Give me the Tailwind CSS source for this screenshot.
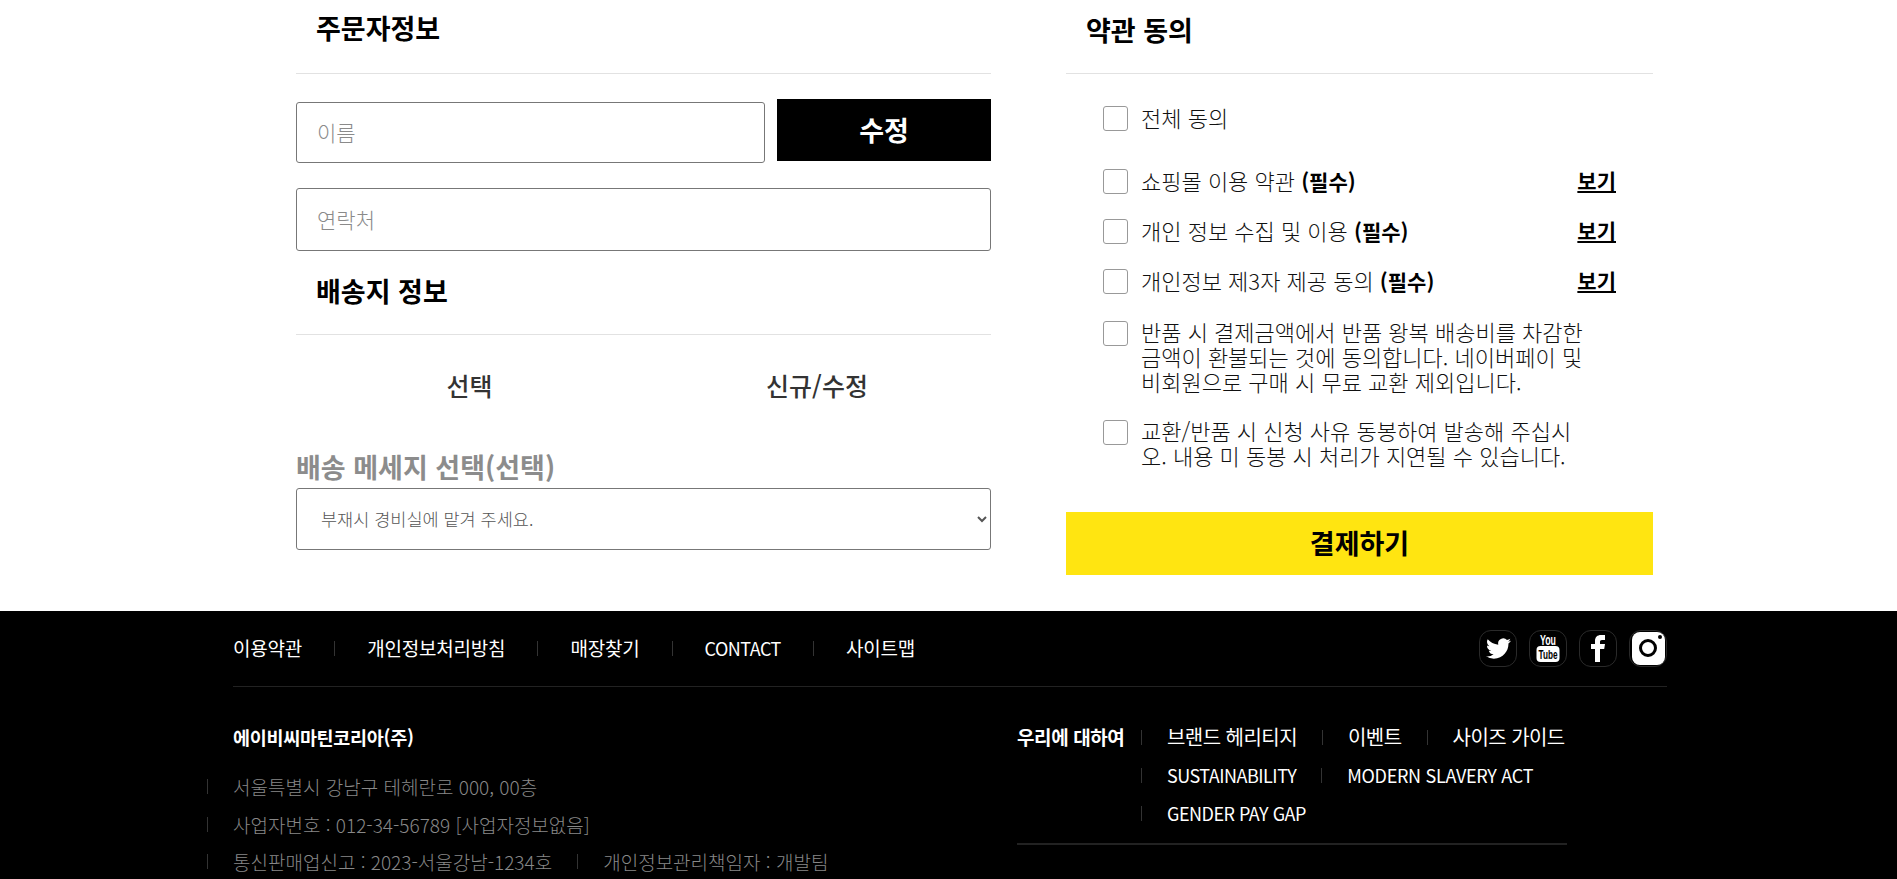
<!doctype html>
<html lang="ko">
<head>
<meta charset="utf-8">
<script src="https://cdn.jsdelivr.net/npm/@tailwindcss/browser@4"></script>
</head>
<body class="bg-white text-black h-[879px] overflow-hidden font-['Noto_Sans_CJK_KR','Noto_Sans',sans-serif]">
<main class="h-[611px] flex pl-[296px]">
  <section class="w-[695px] shrink-0">
    <h2 class="h-[74px] pl-5 pt-[10px] border-b border-[#e2e2e2] text-[27px] leading-[36px] font-bold">주문자정보</h2>
    <div class="mt-[25px] flex items-start gap-3">
      <input class="mt-[3px] w-[469px] h-[61px] px-5 pb-[2px] border border-[#777] rounded-[3px] text-[21px] font-light placeholder:text-[#8a8a8a]" placeholder="이름">
      <button class="w-[214px] h-[62px] bg-black text-white text-[27px] font-bold">수정</button>
    </div>
    <input class="mt-[25px] block w-full h-[63px] px-5 pb-[2px] border border-[#777] rounded-[3px] text-[21px] font-light placeholder:text-[#8a8a8a]" placeholder="연락처">
    <h2 class="h-[84px] pl-5 pt-[22px] border-b border-[#e2e2e2] text-[27px] leading-[36px] font-bold">배송지 정보</h2>
    <div class="flex h-[101px] items-center text-[25px] font-medium text-[#333]">
      <div class="w-[347px] text-center">선택</div>
      <div class="w-[348px] text-center">신규/수정</div>
    </div>
    <label class="block h-[52px] pt-[13px] text-[27px] leading-[36px] font-bold text-[#8c8c8c]">배송 메세지 선택(선택)</label>
    <select class="block w-full h-[62px] pl-[20px] pb-[2px] border border-[#777] rounded-[3px] bg-white text-[17.500px] font-light text-[#555]">
      <option>부재시 경비실에 맡겨 주세요.</option>
    </select>
  </section>
  <section class="w-[587px] ml-[75px] shrink-0">
    <h2 class="h-[74px] pl-5 pt-[12px] border-b border-[#e2e2e2] text-[27px] leading-[36px] font-bold">약관 동의</h2>
    <div class="pl-[37px] pt-[32px] text-[22px] leading-[25px] font-light text-[#111]">
      <label class="flex items-start gap-[13px]"><input type="checkbox" class="appearance-none shrink-0 size-[25px] border border-[#999] rounded-[3px] bg-white"><span class="-mt-px">전체 동의</span></label>
      <div class="mt-[38px] flex items-start gap-[13px] h-[25px]"><input type="checkbox" class="appearance-none shrink-0 size-[25px] border border-[#999] rounded-[3px] bg-white"><span class="flex-1 -mt-px">쇼핑몰 이용 약관 <b class="text-black font-bold text-[21px] leading-none">(필수)</b></span><a class="mr-[37px] -mt-px text-black font-bold underline text-[21px]">보기</a></div>
      <div class="mt-[25px] flex items-start gap-[13px] h-[25px]"><input type="checkbox" class="appearance-none shrink-0 size-[25px] border border-[#999] rounded-[3px] bg-white"><span class="flex-1 -mt-px">개인 정보 수집 및 이용 <b class="text-black font-bold text-[21px] leading-none">(필수)</b></span><a class="mr-[37px] -mt-px text-black font-bold underline text-[21px]">보기</a></div>
      <div class="mt-[25px] flex items-start gap-[13px] h-[25px]"><input type="checkbox" class="appearance-none shrink-0 size-[25px] border border-[#999] rounded-[3px] bg-white"><span class="flex-1 -mt-px">개인정보 제3자 제공 동의 <b class="text-black font-bold text-[21px] leading-none">(필수)</b></span><a class="mr-[37px] -mt-px text-black font-bold underline text-[21px]">보기</a></div>
      <label class="mt-[27px] flex items-start gap-[13px]"><input type="checkbox" class="appearance-none shrink-0 size-[25px] border border-[#999] rounded-[3px] bg-white"><span class="w-[450px] -mt-[2px]">반품 시 결제금액에서 반품 왕복 배송비를 차감한 금액이 환불되는 것에 동의합니다. 네이버페이 및 비회원으로 구매 시 무료 교환 제외입니다.</span></label>
      <label class="mt-[26px] flex items-start gap-[13px]"><input type="checkbox" class="appearance-none shrink-0 size-[25px] border border-[#999] rounded-[3px] bg-white"><span class="w-[450px] -mt-[2px]">교환/반품 시 신청 사유 동봉하여 발송해 주십시오. 내용 미 동봉 시 처리가 지연될 수 있습니다.</span></label>
    </div>
    <button class="mt-[44px] block w-full h-[63px] bg-[#ffe511] text-black text-[27px] font-bold">결제하기</button>
  </section>
</main>
<footer class="relative h-[268px] bg-black text-white overflow-hidden pl-[233px] text-[19px]">
  <div class="w-[1434px] h-[76px] pb-[1px] flex items-center justify-between border-b border-[#222]">
    <nav class="flex items-center gap-[32px] tracking-[-0.2px]">
      <a>이용약관</a><i class="w-px h-[15px] bg-[#333]"></i><a>개인정보처리방침</a><i class="w-px h-[15px] bg-[#333]"></i><a>매장찾기</a><i class="w-px h-[15px] bg-[#333]"></i><a class="text-[18px] tracking-[-0.5px]">CONTACT</a><i class="w-px h-[15px] bg-[#333]"></i><a>사이트맵</a>
    </nav>
    <div class="flex gap-[12px]">
      <span class="w-[38px] h-[37px] rounded-[12px] border border-[#2a2a2a] flex items-center justify-center"><svg class="size-[25px]" viewBox="0 0 24 24" fill="#fff"><path d="M23.953 4.57a10 10 0 01-2.825.775 4.958 4.958 0 002.163-2.723c-.951.555-2.005.959-3.127 1.184a4.92 4.92 0 00-8.384 4.482C7.69 8.095 4.067 6.13 1.64 3.162a4.822 4.822 0 00-.666 2.475c0 1.71.87 3.213 2.188 4.096a4.904 4.904 0 01-2.228-.616v.06a4.923 4.923 0 003.946 4.827 4.996 4.996 0 01-2.212.085 4.936 4.936 0 004.604 3.417 9.867 9.867 0 01-6.102 2.105c-.39 0-.779-.023-1.17-.067a13.995 13.995 0 007.557 2.209c9.053 0 13.998-7.496 13.998-13.985 0-.21 0-.42-.015-.63A9.935 9.935 0 0024 4.59z"/></svg></span>
      <span class="w-[38px] h-[37px] rounded-[12px] border border-[#2a2a2a] flex items-center justify-center"><svg class="size-[30px]" viewBox="0 0 30 30"><text x="15" y="12" text-anchor="middle" fill="#fff" font-family="Liberation Sans" font-weight="700" font-size="15" textLength="16" lengthAdjust="spacingAndGlyphs">You</text><rect x="3.500" y="13" width="23" height="16" rx="4" fill="#fff"/><text x="15" y="25.500" text-anchor="middle" fill="#000" font-family="Liberation Sans" font-weight="700" font-size="13" textLength="19" lengthAdjust="spacingAndGlyphs">Tube</text></svg></span>
      <span class="w-[38px] h-[37px] rounded-[12px] border border-[#2a2a2a] flex items-center justify-center"><svg class="size-[30px]" viewBox="0 0 30 30" fill="#fff"><path d="M12 29V16H8v-5h4V8c0-4 2.400-6 6-6h4v5h-3c-1.500 0-2 .8-2 2v2h5l-.8 5H17v13z"/></svg></span>
      <span class="w-[38px] h-[37px] rounded-[12px] border border-[#2a2a2a] flex items-center justify-center"><span class="relative size-[33px] rounded-[8px] bg-white flex items-center justify-center"><span class="size-[18px] rounded-full border-[3px] border-black"></span><span class="absolute top-[3px] right-[3px] size-[4px] rounded-full bg-black"></span></span></span>
    </div>
  </div>
  <div class="flex">
    <div class="w-[784px]">
      <h3 class="mt-[36px] text-[18.500px] tracking-[-0.3px] leading-[28px] font-bold">에이비씨마틴코리아(주)</h3>
      <ul class="mt-[17px] text-[#888] font-light leading-[37.500px]">
        <li class="relative before:absolute before:-left-[26px] before:top-[11px] before:h-[15px] before:w-px before:bg-[#333]">서울특별시 강남구 테헤란로 000, 00층</li>
        <li class="relative before:absolute before:-left-[26px] before:top-[11px] before:h-[15px] before:w-px before:bg-[#333]">사업자번호 : 012-34-56789 [사업자정보없음]</li>
        <li class="relative flex gap-[25px] items-center before:absolute before:-left-[26px] before:top-[11px] before:h-[15px] before:w-px before:bg-[#333]"><span>통신판매업신고 : 2023-서울강남-1234호</span><i class="w-px h-[15px] bg-[#333]"></i><span>개인정보관리책임자 : 개발팀</span></li>
      </ul>
    </div>
    <div class="w-[550px]">
      <div class="mt-[36px] flex">
        <strong class="w-[124px] leading-[28px] font-bold tracking-[-0.4px] whitespace-nowrap">우리에 대하여</strong>
        <div class="flex-1 leading-[38px] -mt-[5px] whitespace-nowrap">
          <div class="flex items-center gap-[25px] text-[20px] tracking-[-0.55px]"><i class="w-px h-[15px] bg-[#333]"></i><a>브랜드 헤리티지</a><i class="w-px h-[15px] bg-[#333]"></i><a>이벤트</a><i class="w-px h-[15px] bg-[#333]"></i><a>사이즈 가이드</a></div>
          <div class="flex items-center gap-[25px] text-[18px] tracking-[-0.5px]"><i class="w-px h-[15px] bg-[#333]"></i><a>SUSTAINABILITY</a><i class="w-px h-[15px] bg-[#333]"></i><a class="tracking-[-0.3px]">MODERN SLAVERY ACT</a></div>
          <div class="flex items-center gap-[25px] text-[18px] tracking-[-0.5px]"><i class="w-px h-[15px] bg-[#333]"></i><a>GENDER PAY GAP</a></div>
        </div>
      </div>
      <div class="mt-[11px] h-[2px] bg-[#222]"></div>
    </div>
  </div>
</footer>
</body>
</html>
